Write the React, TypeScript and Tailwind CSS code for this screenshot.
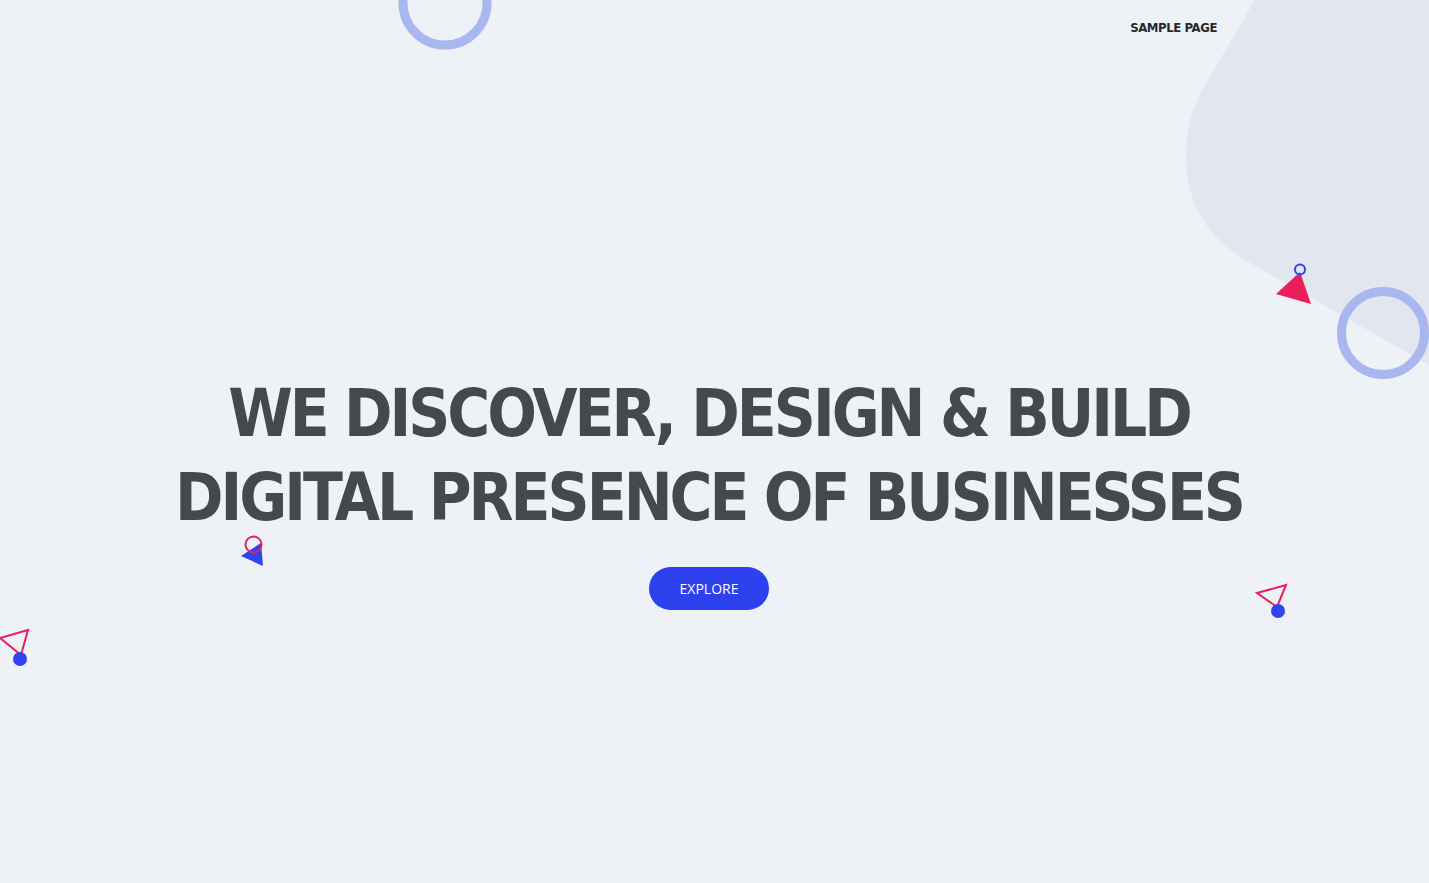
import React from 'react'

function Decorations() {
  return (
    <svg
      className="absolute inset-0 pointer-events-none"
      width="1429"
      height="883"
      viewBox="0 0 1429 883"
      fill="none"
    >
      {/* soft blob on the right */}
      <path d="M1255 0 L1203 88 Q1186 118 1186 155 Q1186 225 1245 260 L1429 365 V0 Z" fill="#e2e7ef" />

      {/* big rings */}
      <circle cx="445" cy="3" r="42" stroke="#a9b7f1" strokeWidth="9" />
      <circle cx="1383" cy="333" r="41.5" stroke="#a9b7f1" strokeWidth="9" />

      {/* pink triangle + tiny ring */}
      <polygon points="1300,272 1276,294 1311,304" fill="#e91e5a" />
      <circle cx="1300" cy="269.5" r="5" stroke="#2f43ee" strokeWidth="2" />

      {/* blue triangle + pink ring */}
      <polygon points="261,543 241,556 263,566" fill="#2f43ee" />
      <circle cx="253.5" cy="544.5" r="8" stroke="#e91e5a" strokeWidth="2" />

      {/* outline triangle + dot, left */}
      <polygon points="0,638 28,630 21,655" stroke="#e91e5a" strokeWidth="2" strokeLinejoin="miter" />
      <circle cx="20" cy="659" r="7" fill="#2f43ee" />

      {/* outline triangle + dot, right */}
      <polygon points="1257,593 1286,585 1277,607" stroke="#e91e5a" strokeWidth="2" strokeLinejoin="miter" />
      <circle cx="1278" cy="611" r="7" fill="#2f43ee" />
    </svg>
  )
}

export default function App() {
  return (
    <div className="relative w-full h-[883px] overflow-hidden bg-[#eef2f7] font-['Liberation_Sans_Narrow','DejaVu_Sans_Condensed',sans-serif]">
      <Decorations />

      <div className="relative z-10 flex flex-col h-full">
        {/* Top nav */}
        <nav className="flex justify-end pr-[212px] pt-[18px]">
          <a href="#" className="text-[13px] font-semibold text-[#26282b] tracking-[-0.4px]">
            SAMPLE PAGE
          </a>
        </nav>

        {/* Hero */}
        <section className="flex flex-col items-center pt-[334px] pr-[11px]">
          <h1 className="text-center text-[65px] leading-[84px] font-bold tracking-[-3px] text-[#45484d]">
            WE DISCOVER, DESIGN &amp; BUILD
            <br />
            DIGITAL PRESENCE OF BUSINESSES
          </h1>
          <button className="mt-[27px] w-[120px] h-[43px] rounded-full bg-[#2e41ef] text-white text-[14px] font-['Open_Sans',sans-serif]">
            EXPLORE
          </button>
        </section>
      </div>
    </div>
  )
}
